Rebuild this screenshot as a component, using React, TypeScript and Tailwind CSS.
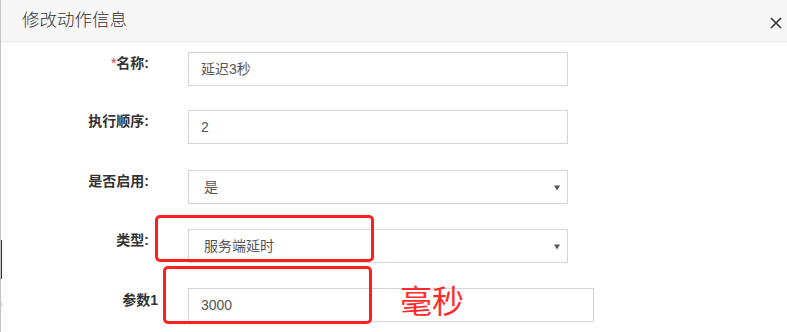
import React from "react";

const font = { fontFamily: '"Liberation Sans", Arial, "Noto Sans CJK SC", sans-serif' };

function Field({ label, required, children, mb }: { label: string; required?: boolean; children: React.ReactNode; mb: string }) {
  return (
    <div className={`flex items-start ${mb}`}>
      <div className="w-[149px] shrink-0 pt-[1px] pr-[1px] text-right text-[14px] leading-[20px] font-bold text-[#333]">
        {required && <span className="text-[#e4393c] font-normal">*</span>}
        {label}
      </div>
      <div className="ml-[38px]">{children}</div>
    </div>
  );
}

function TextBox({ value, w = "w-[380px]" }: { value: string; w?: string }) {
  return (
    <div className={`${w} h-[34px] border border-[#d3d4de] bg-white flex items-center pl-[12px] text-[14px] text-[#555]`}>
      {value}
    </div>
  );
}

function SelectBox({ value }: { value: string }) {
  return (
    <div className="w-[380px] h-[34px] border border-[#d3d4de] bg-white flex items-center justify-between pl-[15px] pr-[7px] text-[14px] text-[#555]">
      <span>{value}</span>
      <svg width="6" height="6" viewBox="0 0 6 6" className="mt-[1px]">
        <path d="M0 0.5 H6 L3 5.5 Z" fill="#555" />
      </svg>
    </div>
  );
}

export default function App() {
  return (
    <div className="relative w-[787px] h-[332px] overflow-hidden bg-white border-l border-[#c4c4c4]" style={font}>
      <header className="h-[42px] bg-[#f7f7f7] border-b border-[#e8e8e8] flex items-center justify-between pl-[21px] pr-[5px]">
        <span className="text-[17.5px] text-[#333] leading-none mt-[-3px]" style={{ fontFamily: '"Noto Sans CJK SC", sans-serif', fontWeight: 300 }}>
          修改动作信息
        </span>
        <svg width="12" height="12" viewBox="0 0 12 12" className="mt-[4px]">
          <path d="M1 1 L11 11 M11 1 L1 11" stroke="#333" strokeWidth="1.6" />
        </svg>
      </header>

      <div className="pt-[10px]">
        <Field label="名称:" required mb="mb-[24px]">
          <TextBox value="延迟3秒" />
        </Field>
        <Field label="执行顺序:" mb="mb-[26px]">
          <TextBox value="2" />
        </Field>
        <Field label="是否启用:" mb="mb-[25px]">
          <SelectBox value="是" />
        </Field>
        <Field label="类型:" mb="mb-[25px]">
          <SelectBox value="服务端延时" />
        </Field>
        <div className="flex items-start">
          <div className="w-[157px] shrink-0 pt-[2px] text-right text-[14px] leading-[20px] font-bold text-[#333]">参数1</div>
          <div className="ml-[30px]">
            <TextBox value="3000" w="w-[406px]" />
          </div>
        </div>
      </div>

      {/* red annotations */}
      <div className="absolute left-[154px] top-[215px] w-[219px] h-[47px] border-[3px] border-[#ff1e1e] rounded-[5px]" />
      <div className="absolute left-[162px] top-[266px] w-[209px] h-[58px] border-[3px] border-[#ff1e1e] rounded-[5px]" />
      <div className="absolute left-[399px] top-[283px] text-[32px] leading-none text-[#ff2a2a]" style={{ fontFamily: '"Noto Sans CJK SC", sans-serif' }}>
        毫秒
      </div>

      {/* background peeking at left edge */}
      <div className="absolute left-[-1px] top-[240px] w-[2px] h-[39px] bg-[#333]" />
      <div className="absolute left-[-1px] top-[302px] w-[2px] h-[5px] bg-[#d8d8a8]" />
    </div>
  );
}
